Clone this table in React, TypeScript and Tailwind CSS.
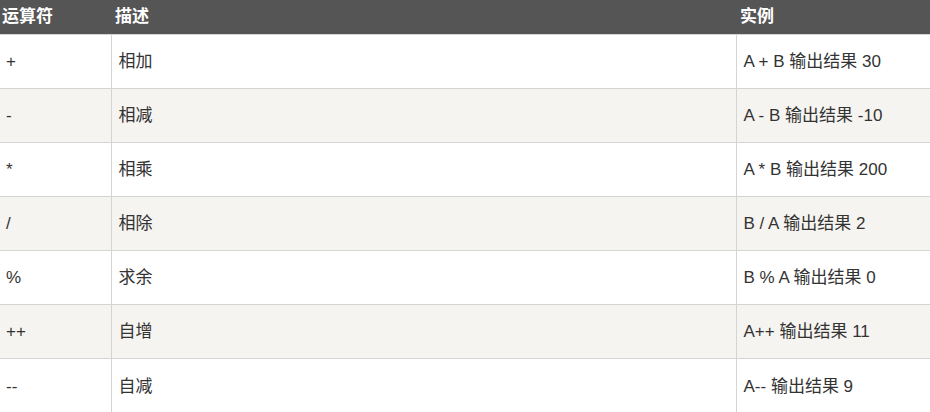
const rows = [
  ["+", "相加", "A + B 输出结果 30"],
  ["-", "相减", "A - B 输出结果 -10"],
  ["*", "相乘", "A * B 输出结果 200"],
  ["/", "相除", "B / A 输出结果 2"],
  ["%", "求余", "B % A 输出结果 0"],
  ["++", "自增", "A++ 输出结果 11"],
  ["--", "自减", "A-- 输出结果 9"],
];

export default function App() {
  return (
    <div className="w-[930px] h-[412px] overflow-hidden bg-white font-['Liberation_Sans','Noto_Sans_CJK_SC',sans-serif]">
      <table className="w-[930px] border-collapse table-fixed">
        <colgroup>
          <col className="w-[111px]" />
          <col className="w-[625px]" />
          <col />
        </colgroup>
        <thead>
          <tr className="h-[34px] bg-[#555555] text-white text-left">
            <th className="px-[2px] text-[17px] font-bold">运算符</th>
            <th className="px-[4px] text-[17px] font-bold">描述</th>
            <th className="px-[4px] text-[17px] font-bold">实例</th>
          </tr>
        </thead>
        <tbody className="text-[17px] text-[#333333]">
          {rows.map((r, i) => (
            <tr key={i} className={`h-[54px] ${i % 2 === 1 ? "bg-[#f6f4f0]" : "bg-white"}`}>
              <td className="border-t border-r border-[#d4d4d4] px-[6px] pt-[2px]">{r[0]}</td>
              <td className="border-t border-r border-[#d4d4d4] px-[7px] pt-[2px]">{r[1]}</td>
              <td className="border-t border-[#d4d4d4] px-[7px] pt-[2px]">{r[2]}</td>
            </tr>
          ))}
        </tbody>
      </table>
    </div>
  );
}
